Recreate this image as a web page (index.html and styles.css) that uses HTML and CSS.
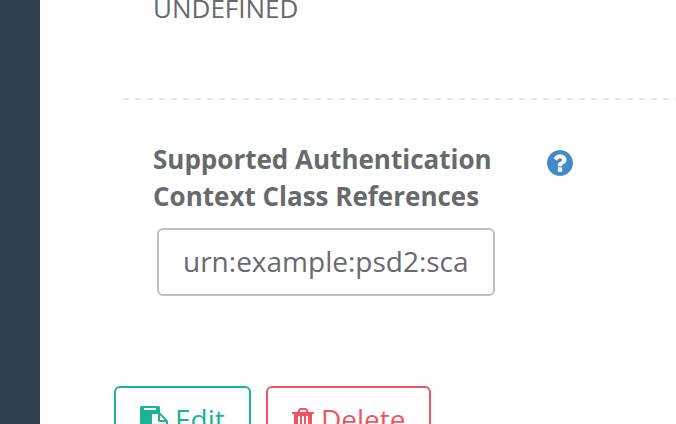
FILE: index.html
```
<!DOCTYPE html>
<html lang="en">
<head>
<meta charset="utf-8">
<title>Client settings</title>
<link rel="stylesheet" href="styles.css">
</head>
<body>
<aside class="sidebar"></aside>
<main class="content">
  <div class="value">UNDEFINED</div>
  <hr class="divider">
  <section class="field">
    <div class="label-row">
      <label class="label" for="acr">Supported Authentication<br>Context Class References</label>
      <svg class="help" viewBox="128 128 1536 1536" aria-hidden="true"><path fill="currentColor" d="M1024 1376v-192q0-14-9-23t-23-9h-192q-14 0-23 9t-9 23v192q0 14 9 23t23 9h192q14 0 23-9t9-23zm256-672q0-88-55.500-163t-138.500-116-170-41q-243 0-371 213-15 24 8 42l132 100q7 6 19 6 16 0 25-12 53-68 86-92 34-24 86-24 48 0 85.500 26t37.500 59q0 38-20 61t-68 45q-63 28-115.500 86.500t-52.500 125.500v36q0 14 9 23t23 9h192q14 0 23-9t9-23q0-19 21.500-49.500t54.500-49.500q32-18 49-28.500t46-35 44.500-48 28-60.500 12.500-81zm384 192q0 209-103 385.500t-279.500 279.500-385.500 103-385.500-103-279.500-279.500-103-385.500 103-385.500 279.500-279.500 385.500-103 385.500 103 279.500 279.500 103 385.500z"/></svg>
    </div>
    <input class="input" id="acr" value="urn:example:psd2:sca" readonly>
  </section>
  <div class="actions">
    <button class="button edit"><svg class="icon" viewBox="0 0 1792 1792" aria-hidden="true"><path fill="currentColor" d="M768 1664h896v-640h-416q-40 0-68-28t-28-68v-416h-384v1152zm256-1440v-64q0-13-9.500-22.500t-22.500-9.500h-704q-13 0-22.500 9.500t-9.500 22.500v64q0 13 9.500 22.500t22.500 9.500h704q13 0 22.500-9.500t9.500-22.500zm256 672h299l-299-299v299zm512 128v672q0 40-28 68t-68 28h-960q-40 0-68-28t-28-68v-160h-544q-40 0-68-28t-28-68v-1344q0-40 28-68t68-28h1088q40 0 68 28t28 68v328q21 13 36 28l408 408q28 28 48 76t20 88z"/></svg><span>Edit</span></button>
    <button class="button delete"><svg class="icon trash" viewBox="192 0 1408 1792" aria-hidden="true"><path fill="currentColor" d="M704 1376v-704q0-14-9-23t-23-9h-64q-14 0-23 9t-9 23v704q0 14 9 23t23 9h64q14 0 23-9t9-23zm256 0v-704q0-14-9-23t-23-9h-64q-14 0-23 9t-9 23v704q0 14 9 23t23 9h64q14 0 23-9t9-23zm256 0v-704q0-14-9-23t-23-9h-64q-14 0-23 9t-9 23v704q0 14 9 23t23 9h64q14 0 23-9t9-23zm-544-992h448l-48-117q-7-9-17-11h-317q-10 2-17 11zm928 32v64q0 14-9 23t-23 9h-96v948q0 83-47 143.500t-113 60.500h-832q-66 0-113-58.500t-47-141.500v-952h-96q-14 0-23-9t-9-23v-64q0-14 9-23t23-9h309l70-167q15-37 54-63t79-26h320q40 0 79 26t54 63l70 167h309q14 0 23 9t9 23z"/></svg><span>Delete</span></button>
  </div>
</main>
</body>
</html>
```
FILE: styles.css
```
* { box-sizing: border-box; }
body { margin: 0; height: 424px; display: flex; overflow: hidden; background: #fff; color: #676a6c; font-family: "Open Sans", sans-serif; font-size: 26px; }
.sidebar { width: 40px; background: #2f4050; flex: none; }
.content { flex: 1; min-width: 0; height: 424px; overflow: hidden; }
.value { height: 98px; margin: 0 0 0 113px; line-height: 17px; }
.divider { margin: 0 0 0 83px; border: 0; height: 2px; background: repeating-linear-gradient(90deg, #e7eaec 0 6px, transparent 6px 12px); }
.field { margin: 41px 0 0 113px; }
.label-row { display: flex; height: 74px; }
.label { width: 394px; font-weight: 700; line-height: 37px; white-space: nowrap; }
.help { width: 26px; height: 26px; margin-top: 9.3px; color: #428bca; }
.input { display: block; width: 338px; height: 68px; margin: 13px 0 0 4px; padding: 0 24px 2px; border: 2px solid #bfbfbf; border-radius: 6px; font: 28px "Open Sans", sans-serif; color: #676a6c; }
.actions { display: flex; gap: 15px; margin: 90px 0 0 74px; }
.button { height: 68px; display: flex; align-items: center; padding: 0 24px 2px; border: 2px solid; border-radius: 6px; background: #fff; font: 28px "Open Sans", sans-serif; }
.edit { width: 137px; color: #1ab394; }
.delete { width: 165px; color: #ed5565; }
.icon { width: 28px; height: 28px; margin: 2px 7px 0 0; flex: none; }
.trash { width: 22px; }
```
